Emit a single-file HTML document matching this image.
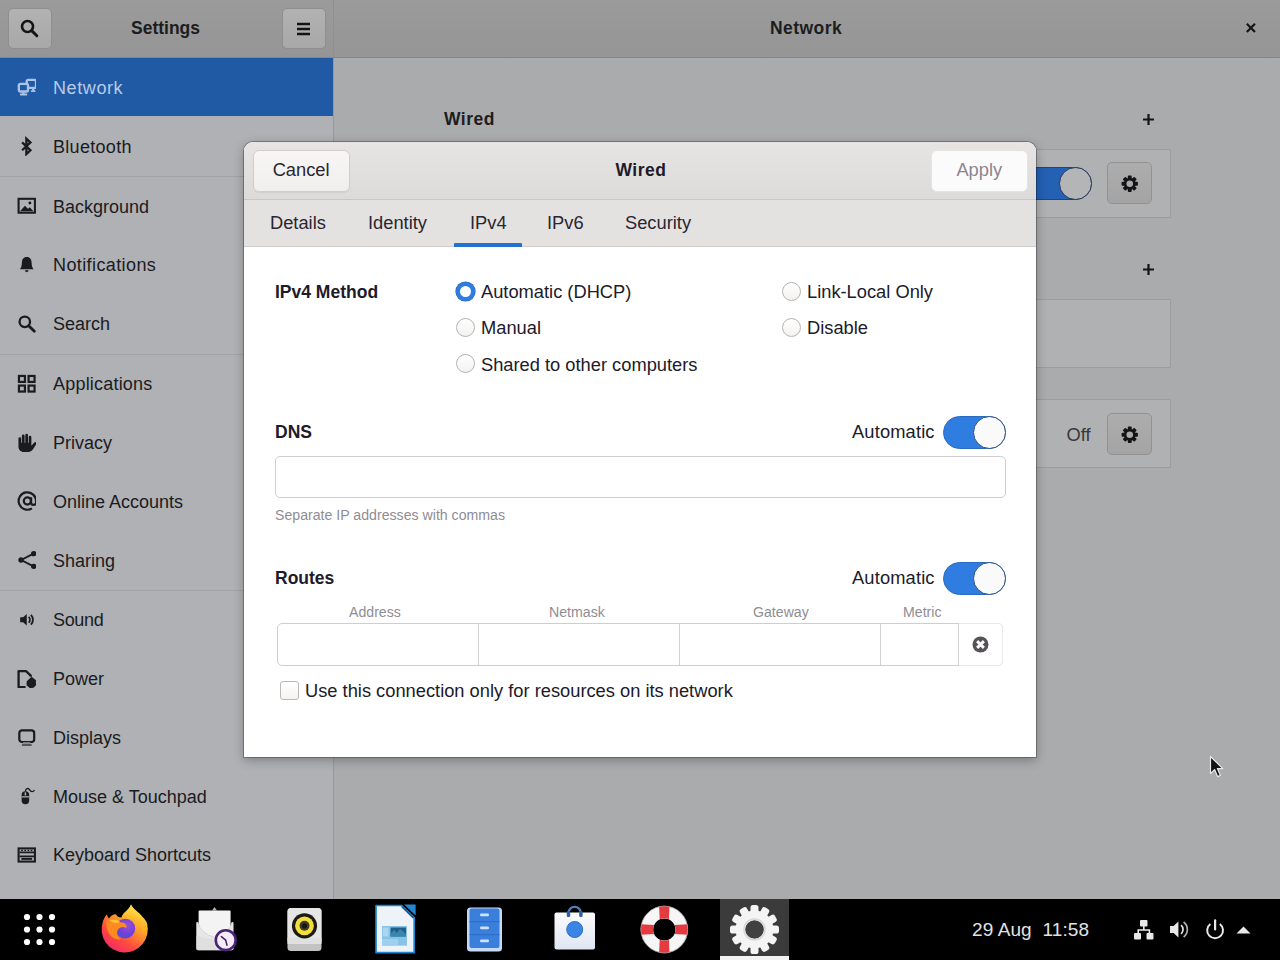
<!DOCTYPE html>
<html>
<head>
<meta charset="utf-8">
<title>Settings - Network - Wired</title>
<style>
*{box-sizing:border-box;margin:0;padding:0}
html,body{width:1280px;height:960px;overflow:hidden}
body{position:relative;background:#aaabad;font-family:"Liberation Sans",sans-serif;font-size:18px;color:#1f1c24;-webkit-font-smoothing:antialiased}
.abs{position:absolute}
#dlgi{position:absolute;left:-.4px;top:-.8px;width:793px;height:616px}
/* ---------- window header ---------- */
#hdr{position:absolute;left:0;top:0;width:1280px;height:58px;background:linear-gradient(#9b9b9b,#959595);border-bottom:1px solid #868686}
#hdr .sep{position:absolute;left:333px;top:0;width:1px;height:58px;background:#908f8e}
.hbtn{position:absolute;top:7.6px;width:44px;height:41.6px;border:1px solid #8f8f8f;border-radius:5px;background:linear-gradient(#b2b2b3,#a8a8a9);margin-left:-.4px}
.htitle{position:absolute;top:18px;font-weight:700;font-size:17.5px;color:#1d1d1f;white-space:nowrap}
/* ---------- sidebar ---------- */
#side{position:absolute;left:0;top:58px;width:334px;height:842px;background:#afb1b4;border-right:1px solid #98999b}
.row{position:absolute;left:0;width:333px;height:59px}
.row span{position:absolute;left:53px;top:19.4px;font-size:18px;line-height:21px;white-space:nowrap;color:#1b1b1f}
.row svg{position:absolute;left:16.75px;top:18.5px;width:19.5px;height:19.5px}
.row.sel{background:#205aa5}
.row.sel span{color:#b9cbe6}
.sline{position:absolute;left:0;width:333px;height:1px;background:#a1a2a5}
/* ---------- main content (dimmed) ---------- */
.sect{position:absolute;font-weight:700;font-size:17.5px;color:#1d1d1f}
.panel{position:absolute;left:443px;width:728px;border:1px solid #9b9c9d;background:#b0b1b3;border-radius:1px}
.gbtn{position:absolute;left:1107px;width:45px;height:42px;border:1px solid #929293;border-radius:5px;background:linear-gradient(#adadad,#a4a4a4)}
/* ---------- taskbar ---------- */
#bar{position:absolute;left:0;top:899px;width:1280px;height:61px;background:#000}
/* ---------- dialog ---------- */
#dlg{position:absolute;left:244.4px;top:141.8px;width:791.4px;height:615.2px;background:#fff;border-radius:9px 9px 0 0;box-shadow:0 0 0 1px rgba(0,0,0,.27),0 3px 11px rgba(0,0,0,.3);overflow:hidden}
#dhead{position:absolute;left:0;top:0;width:793px;height:59px;background:linear-gradient(#e6e5e4,#dddbda);border-bottom:1px solid #c9c6c4}
#dtabs{position:absolute;left:0;top:59px;width:793px;height:47px;background:#e4e2e1;border-bottom:1px solid #d0cdcb}
.dbtn{position:absolute;top:9px;height:41.6px;border:1px solid #d2cdc9;border-radius:6px;background:linear-gradient(#f7f6f5,#f0efee);text-align:center;line-height:37.6px;font-size:18.3px;color:#2a2630;box-shadow:0 1px 1px rgba(0,0,0,.06)}
.tab{position:absolute;top:11.8px;font-size:18.3px;color:#2a2630;white-space:nowrap}
.lbl{position:absolute;font-size:18.3px;line-height:21px;white-space:nowrap;color:#211a2a;margin-top:-.3px}
.b{font-weight:700;font-size:17.5px;margin-top:.6px !important}
.radio{position:absolute;width:19px;height:19px;border:1px solid #b7b3b0;border-radius:50%;background:linear-gradient(#fff,#f3f2f1)}
.radio.on{border:4.5px solid #2f7de0;background:#fff;box-shadow:0 0 0 .6px #2a67bb}
.sw{position:absolute;width:63px;height:33px;border-radius:17px;background:#2f7de0;border:1px solid #2a6bc0;margin-top:1px}
.sw i{position:absolute;right:-1px;top:-1px;width:33px;height:33px;border-radius:50%;background:#fafafa;border:1.3px solid #2b4f82}
.entry{position:absolute;border:1px solid #cfcdd3;border-radius:5px;background:#fff}
.small{position:absolute;font-size:14.15px;color:#8f8d94;white-space:nowrap;margin-top:-.7px}
</style>
</head>
<body>

<!-- WINDOW HEADER -->
<div id="hdr">
  <div class="hbtn" style="left:8px"><svg class="abs" style="left:10px;top:9px" width="21" height="21" viewBox="0 0 16 16"><circle cx="6.5" cy="6.5" r="4.2" fill="none" stroke="#141416" stroke-width="2"/><path d="M9.8 9.8 L13.6 13.6" stroke="#141416" stroke-width="2.2" stroke-linecap="round"/></svg></div>
  <div class="htitle" style="left:131px">Settings</div>
  <div class="hbtn" style="left:282px"><svg class="abs" style="left:13px;top:12px" width="15" height="16" viewBox="0 0 15 16"><path d="M1 3 H14 M1 8 H14 M1 13 H14" stroke="#141416" stroke-width="2.3"/></svg></div>
  <div class="sep"></div>
  <div class="htitle" style="left:770px;letter-spacing:.45px">Network</div>
  <svg class="abs" style="left:1244.8px;top:22.4px" width="11.8" height="11.8" viewBox="0 0 13 13"><path d="M2 2 L11 11 M11 2 L2 11" stroke="#141416" stroke-width="2.4"/></svg>
</div>

<!-- SIDEBAR -->
<div id="side">
  <div class="row sel" style="top:0px;height:58px"><svg viewBox="0 0 16 16"><g fill="none" stroke="#aac4e8" stroke-width="1.9"><rect x="8" y="2.3" width="7.6" height="6.6" rx="1.2"/><rect x="1.5" y="5.6" width="7.5" height="6.3" rx="1.2" fill="#205aa5"/></g><g fill="#aac4e8"><rect x="4.3" y="12.6" width="2" height="1.4"/><rect x="2.4" y="13.6" width="6" height="1.6" rx=".4"/><rect x="12.4" y="9.6" width="1.8" height="1.6"/><rect x="11.4" y="10.8" width="3.8" height="1.5" rx=".4"/></g></svg><span style="letter-spacing:.6px;top:20.1px">Network</span></div>
  <div class="row" style="top:59.9px"><svg viewBox="0 0 16 16"><path d="M4.2 4.8 L11 11.2 L7.7 14.3 V1.7 L11 4.8 L4.2 11.2" fill="none" stroke="#1b1b1f" stroke-width="1.9" stroke-linejoin="miter" transform="translate(0 .5)"/></svg><span style="letter-spacing:.3px">Bluetooth</span></div>
  <div class="row" style="top:119.4px"><svg viewBox="0 0 16 16"><rect x="1.3" y="2.3" width="13.4" height="11.4" fill="none" stroke="#1b1b1f" stroke-width="1.7"/><path d="M2.5 12.5 L6.5 8 L9 10.5 L10.5 9.3 L13.5 12.5 Z" fill="#1b1b1f"/><circle cx="10.6" cy="5.8" r="1.2" fill="#1b1b1f"/></svg><span>Background</span></div>
  <div class="row" style="top:178px"><svg viewBox="0 0 16 16"><path d="M8 1.6 C5.2 1.6 4 3.8 4 6.4 C4 9 3.4 10.4 2.4 11.6 L13.6 11.6 C12.6 10.4 12 9 12 6.4 C12 3.8 10.8 1.6 8 1.6 Z M6.5 12.6 h3 a1.5 1.5 0 0 1 -3 0 Z" fill="#1b1b1f"/></svg><span style="letter-spacing:.4px">Notifications</span></div>
  <div class="row" style="top:237px"><svg viewBox="0 0 16 16"><circle cx="6.4" cy="6.4" r="4.3" fill="none" stroke="#1b1b1f" stroke-width="1.9"/><path d="M9.6 9.6 L14.2 14.2" stroke="#1b1b1f" stroke-width="2.3" stroke-linecap="round"/></svg><span>Search</span></div>
  <div class="row" style="top:297px"><svg viewBox="0 0 16 16"><g fill="none" stroke="#1b1b1f" stroke-width="1.8"><rect x="1.6" y="1.6" width="4.9" height="4.9"/><rect x="9.5" y="1.6" width="4.9" height="4.9"/><rect x="1.6" y="9.5" width="4.9" height="4.9"/><rect x="9.5" y="9.5" width="4.9" height="4.9"/></g></svg><span style="letter-spacing:.2px">Applications</span></div>
  <div class="row" style="top:356px"><svg viewBox="0 0 16 16"><path d="M1.2 4.6 a1.1 1.1 0 0 1 2.2 0 V8 h.6 V2.4 a1.1 1.1 0 0 1 2.2 0 V8 h.6 V1.8 a1.1 1.1 0 0 1 2.2 0 V8 h.6 V3.4 a1.1 1.1 0 0 1 2.2 0 V10.4 L14.2 7.8 a1.05 1.05 0 0 1 1.7 1.2 L13 13.6 C12 15 10.6 15.6 8.8 15.6 H6 C3.2 15.6 1.2 13.8 1.2 11 Z" fill="#1b1b1f"/></svg><span>Privacy</span></div>
  <div class="row" style="top:414.7px"><svg viewBox="0 0 16 16"><g transform="translate(8.5 8.2) scale(1.17) translate(-8 -8)"><circle cx="8" cy="8" r="2.5" fill="none" stroke="#1b1b1f" stroke-width="1.55"/><path d="M10.6 5.3 V9 a1.7 1.7 0 0 0 3.5 0 V8 A6.1 6.1 0 1 0 11.2 13.2" fill="none" stroke="#1b1b1f" stroke-width="1.55"/></g></svg><span>Online Accounts</span></div>
  <div class="row" style="top:473.6px"><svg viewBox="0 0 16 16"><path d="M13.6 3 L3.4 8.2 L13.6 13.4" fill="none" stroke="#1b1b1f" stroke-width="1.5"/><circle cx="13.7" cy="3" r="2.2" fill="#1b1b1f"/><circle cx="3.3" cy="8.2" r="2.2" fill="#1b1b1f"/><circle cx="13.7" cy="13.4" r="2.2" fill="#1b1b1f"/></svg><span>Sharing</span></div>
  <div class="row" style="top:533px"><svg viewBox="0 0 16 16"><path d="M2.6 6 H5 L8 3.2 V12.8 L5 10 H2.6 Z" fill="#1b1b1f"/><path d="M9.6 5.6 a3.4 3.4 0 0 1 0 4.8 M11.4 4 a5.6 5.6 0 0 1 0 8" fill="none" stroke="#1b1b1f" stroke-width="1.5"/></svg><span style="letter-spacing:-.35px">Sound</span></div>
  <div class="row" style="top:592px"><svg viewBox="0 0 16 16"><path d="M7 14.8 H1.3 V1.8 H7.4 L11.3 5.4 V6.4" fill="none" stroke="#1b1b1f" stroke-width="1.9" stroke-linejoin="round"/><path d="M12 6.4 l4.4 3.4 -1.2 .8 1.2 1.8 -2.8 3 -3 .3 -2.8 -2.4 .2 -3.2 2.2 -2.2 Z" fill="#1b1b1f"/></svg><span>Power</span></div>
  <div class="row" style="top:651px"><svg viewBox="0 0 16 16"><rect x="1.9" y="1.9" width="12.2" height="9.6" rx="2.2" fill="none" stroke="#1b1b1f" stroke-width="1.8"/><rect x="4" y="13" width="8" height="1.8" rx=".5" fill="#55565a"/><rect x="5" y="11.6" width="6" height="1.3" fill="#8a8b8e"/></svg><span>Displays</span></div>
  <div class="row" style="top:709.8px"><svg viewBox="0 0 16 16"><path d="M3.8 7.4 a3.1 3.1 0 0 1 6.2 0 V11.8 a3.1 3.1 0 0 1 -6.2 0 Z" fill="#1b1b1f"/><rect x="6.3" y="5.2" width="1.2" height="2.6" fill="#afb1b4"/><rect x="3.8" y="8.4" width="6.2" height="1" fill="#afb1b4"/><path d="M6.9 4.6 C6.9 1.8 9.4 1.4 10.4 3.2 C11.4 5 13.2 5 14.4 3.4" fill="none" stroke="#1b1b1f" stroke-width="1.1"/></svg><span>Mouse &amp; Touchpad</span></div>
  <div class="row" style="top:768px"><svg viewBox="0 0 16 16"><rect x="1.3" y="2.8" width="13.4" height="10.8" fill="none" stroke="#1b1b1f" stroke-width="1.7"/><path d="M2 6.1 H14 M2 9.3 H14" stroke="#1b1b1f" stroke-width="1.5"/><path d="M3.4 4.4 h1.4 M6 4.4 h1.4 M8.6 4.4 h1.4 M11.2 4.4 h1.4" stroke="#1b1b1f" stroke-width="1.2"/><rect x="3.6" y="10.6" width="8.8" height="1.6" fill="#1b1b1f"/></svg><span>Keyboard Shortcuts</span></div>
  <div class="sline" style="top:118px"></div>
  <div class="sline" style="top:296px"></div>
  <div class="sline" style="top:532px"></div>
</div>

<!-- MAIN -->
<div id="main">
  <div class="sect" style="left:444px;top:109px;letter-spacing:.5px">Wired</div>
  <svg class="abs" style="left:1142px;top:113px" width="13" height="13" viewBox="0 0 13 13"><path d="M6.5 1 V12 M1 6.5 H12" stroke="#141416" stroke-width="2.2"/></svg>
  <div class="panel" style="top:149px;height:69px"></div>
  <div class="abs" style="left:1000px;top:166.8px;width:92px;height:32.8px;border-radius:17px;background:#2460b4;border:1px solid #1a4686"><i class="abs" style="right:-1px;top:-1px;width:32.8px;height:32.8px;border-radius:50%;background:#b4b5b7;border:1.5px solid #24395b"></i></div>
  <div class="gbtn" style="top:162px"><svg class="abs" style="left:12px;top:10.5px" width="19.5" height="19.5" viewBox="-11 -11 22 22"><g fill="#141416"><rect x="-2.2" y="-9.2" width="4.4" height="5" rx="1" transform="rotate(0)"/><rect x="-2.2" y="-9.2" width="4.4" height="5" rx="1" transform="rotate(45)"/><rect x="-2.2" y="-9.2" width="4.4" height="5" rx="1" transform="rotate(90)"/><rect x="-2.2" y="-9.2" width="4.4" height="5" rx="1" transform="rotate(135)"/><rect x="-2.2" y="-9.2" width="4.4" height="5" rx="1" transform="rotate(180)"/><rect x="-2.2" y="-9.2" width="4.4" height="5" rx="1" transform="rotate(225)"/><rect x="-2.2" y="-9.2" width="4.4" height="5" rx="1" transform="rotate(270)"/><rect x="-2.2" y="-9.2" width="4.4" height="5" rx="1" transform="rotate(315)"/><circle r="6.6"/></g><circle r="3.7" fill="#a9a9a9"/></svg></div>
  <svg class="abs" style="left:1142px;top:263px" width="13" height="13" viewBox="0 0 13 13"><path d="M6.5 1 V12 M1 6.5 H12" stroke="#141416" stroke-width="2.2"/></svg>
  <div class="panel" style="top:299px;height:69px"></div>
  <div class="panel" style="top:399px;height:69px"></div>
  <div class="abs" style="left:1066.5px;top:423.5px;font-size:18.3px;color:#38383a">Off</div>
  <div class="gbtn" style="top:413px"><svg class="abs" style="left:12px;top:10.5px" width="19.5" height="19.5" viewBox="-11 -11 22 22"><g fill="#141416"><rect x="-2.2" y="-9.2" width="4.4" height="5" rx="1" transform="rotate(0)"/><rect x="-2.2" y="-9.2" width="4.4" height="5" rx="1" transform="rotate(45)"/><rect x="-2.2" y="-9.2" width="4.4" height="5" rx="1" transform="rotate(90)"/><rect x="-2.2" y="-9.2" width="4.4" height="5" rx="1" transform="rotate(135)"/><rect x="-2.2" y="-9.2" width="4.4" height="5" rx="1" transform="rotate(180)"/><rect x="-2.2" y="-9.2" width="4.4" height="5" rx="1" transform="rotate(225)"/><rect x="-2.2" y="-9.2" width="4.4" height="5" rx="1" transform="rotate(270)"/><rect x="-2.2" y="-9.2" width="4.4" height="5" rx="1" transform="rotate(315)"/><circle r="6.6"/></g><circle r="3.7" fill="#a9a9a9"/></svg></div>
  <svg class="abs" style="left:1208.7px;top:754.5px" width="16" height="24" viewBox="0 0 16 24"><path d="M1.5 1.5 V18.5 L5.6 14.6 L8.6 21.6 L11.4 20.4 L8.4 13.6 H13.8 Z" fill="#111" stroke="#e8e8e8" stroke-width="1.2" stroke-linejoin="round"/></svg>
</div>

<!-- TASKBAR -->
<div id="bar">
  <div class="abs" style="left:720px;top:0;width:69px;height:61px;background:#3b3b3b"></div>
  <div class="abs" style="left:720px;top:57px;width:69px;height:4px;background:#f2f2f2"></div>
  <svg class="abs" style="left:0;top:0" width="1280" height="61" viewBox="0 0 1280 61">
    <defs>
      <linearGradient id="ffo" x1="0.85" y1="0.05" x2="0.2" y2="1"><stop offset="0" stop-color="#ffe437"/><stop offset=".35" stop-color="#ffa32a"/><stop offset=".7" stop-color="#ff4a3f"/><stop offset="1" stop-color="#f0256d"/></linearGradient>
      <linearGradient id="fff" x1="0.7" y1="0" x2="0.3" y2="1"><stop offset="0" stop-color="#fff14a"/><stop offset=".6" stop-color="#ffb52c"/><stop offset="1" stop-color="#ff7a2a"/></linearGradient>
      <radialGradient id="ffg" cx=".6" cy=".35" r=".8"><stop offset="0" stop-color="#9b4fd6"/><stop offset=".6" stop-color="#6a41d9"/><stop offset="1" stop-color="#3a5be0"/></radialGradient>
      <linearGradient id="env" x1="0" y1="0" x2="0" y2="1"><stop offset="0" stop-color="#f4f4f4"/><stop offset="1" stop-color="#d9d9d9"/></linearGradient>
      <linearGradient id="bag" x1="0" y1="0" x2="0" y2="1"><stop offset="0" stop-color="#fbfbfd"/><stop offset="1" stop-color="#dfe6f2"/></linearGradient>
    </defs>
    <circle cx="27" cy="18" r="3.1" fill="#fff"/><circle cx="39.5" cy="18" r="3.1" fill="#fff"/><circle cx="52" cy="18" r="3.1" fill="#fff"/><circle cx="27" cy="30.5" r="3.1" fill="#fff"/><circle cx="39.5" cy="30.5" r="3.1" fill="#fff"/><circle cx="52" cy="30.5" r="3.1" fill="#fff"/><circle cx="27" cy="43" r="3.1" fill="#fff"/><circle cx="39.5" cy="43" r="3.1" fill="#fff"/><circle cx="52" cy="43" r="3.1" fill="#fff"/>
    <!-- firefox -->
    <g>
      <path d="M131 5.600000000000023 C133 10.5 138.5 13 142 17.5 C145 20.5 146.8 22.5 147.2 25 A23.1 23.1 0 1 1 102.8 23 C103.4 20 105 17.5 107 15.200000000000045 C107.2 17 108 18.5 109 19.5 C110.5 16.799999999999955 113.5 15 116 15.200000000000045 C116.6 17 118.5 18.600000000000023 121.5 18.5 C123.5 13 129.5 11 131 5.600000000000023 Z" fill="url(#ffo)"/>
      <path d="M131 5.600000000000023 C133 10.5 138.5 13 142 17.5 C145.5 21.5 147 26 146 32 C144 24 138 19.5 131 20 C127 20.299999999999955 123 21 121.5 18.5 C123.5 13 129.5 11 131 5.600000000000023 Z" fill="url(#fff)"/>
      <circle cx="125.3" cy="29.600000000000023" r="9.9" fill="url(#ffg)"/>
      <path d="M106.5 22 C110 18.600000000000023 116.5 19 120 23.200000000000045 C124.6 22.799999999999955 127.6 26 126.2 29.200000000000045 C123.6 27 119.4 28.200000000000045 117.8 31 C116 34.60000000000002 117.5 38.60000000000002 121.5 40.5 C112.5 41.5 105.5 34 106.5 22 Z" fill="#ff8a1f"/>
      <path d="M109.5 21.200000000000045 C113.2 19.600000000000023 117.8 20.399999999999977 120 23.200000000000045 C116.4 24.399999999999977 112 23.600000000000023 109.5 21.200000000000045 Z" fill="#ffc53a"/>
    </g>
    <!-- evolution -->
    <g>
      <path d="M212 11.600000000000023 L214.5 8 L217 11.600000000000023 Z" fill="#b4b2ae"/>
      <rect x="198.6" y="11.399999999999977" width="32" height="30" rx="1" fill="#f3f3f3"/>
      <path d="M196.3 24 Q196.3 22.600000000000023 197.6 23 Q201 35 214.9 38.39999999999998 Q229 35 232.2 23 Q233.5 22.600000000000023 233.5 24 V49.39999999999998 Q233.5 51.200000000000045 231.7 51.200000000000045 H198.1 Q196.3 51.200000000000045 196.3 49.39999999999998 Z" fill="#e7e7e7"/>
      <path d="M197.6 23 Q201 35 214.9 38.39999999999998 Q229 35 232.2 23" fill="none" stroke="#d4d4d4" stroke-width=".9"/>
      <path d="M196.3 37 V49.39999999999998 Q196.3 51.200000000000045 198.1 51.200000000000045 H231.7 Q233.5 51.200000000000045 233.5 49.39999999999998 V45 Z" fill="#dcdcdc" opacity=".7"/>
      <circle cx="225.7" cy="41.200000000000045" r="9.9" fill="#f4ecfa" stroke="#4b2376" stroke-width="2.6"/>
      <path d="M225.7 41.200000000000045 L221.4 37.60000000000002 M225.7 41.200000000000045 L227 46.200000000000045" stroke="#40255c" stroke-width="1.5" stroke-linecap="round"/>
    </g>
    <!-- rhythmbox -->
    <g>
      <rect x="287.5" y="9" width="34" height="43" rx="3.5" fill="#c3c3c3"/>
      <rect x="287.5" y="9" width="34" height="35.5" rx="3.5" fill="#e6e6e6"/>
      <rect x="287.5" y="39" width="34" height="6" fill="#e0e0e0"/>
      <circle cx="304.5" cy="26.799999999999955" r="12.6" fill="#1d1b17"/>
      <circle cx="304.5" cy="26.799999999999955" r="9.4" fill="#f3df3a"/>
      <circle cx="304.5" cy="26.799999999999955" r="5" fill="#3d3b26"/>
      <circle cx="304.5" cy="26.799999999999955" r="2.6" fill="#181713"/>
    </g>
    <!-- libreoffice -->
    <g>
      <path d="M376 6.5 H401.6 L414.2 18.600000000000023 V53.60000000000002 H376 Z" fill="#eef3f9" stroke="#1d84cf" stroke-width="1.7" stroke-linejoin="round"/>
      <path d="M404.2 5.399999999999977 H415.6 V16.399999999999977 Z" fill="#2388d3"/>
      <path d="M401.6 7.5 L413.4 18.799999999999955" stroke="#0f5d9c" stroke-width="1.6"/>
      <rect x="382" y="27" width="25" height="19.6" fill="#86c3e6"/>
      <path d="M390.5 28.5 H406 V37.5 H390.5 Z" fill="#1f6088"/>
      <path d="M390.5 35 L394 31 L397 34 L400 30 L406 35 V37.5 H390.5 Z" fill="#3b86b0"/>
      <rect x="382" y="40" width="16" height="6.6" fill="#9fd0ee"/>
      <rect x="383" y="28.5" width="5.5" height="9" fill="#a9d6f0"/>
    </g>
    <!-- files -->
    <g>
      <rect x="467" y="8.5" width="35" height="44" rx="3.5" fill="#c6d9f5"/>
      <rect x="469.5" y="9.5" width="30" height="39.5" rx="2" fill="#3a7fdc"/>
      <rect x="469.5" y="22" width="30" height="1.2" fill="#2f6ec6"/><rect x="469.5" y="35" width="30" height="1.2" fill="#2f6ec6"/>
      <rect x="480" y="14.5" width="9" height="2.8" rx="1.2" fill="#cfe0f7"/>
      <rect x="480" y="27.5" width="9" height="2.8" rx="1.2" fill="#cfe0f7"/>
      <rect x="480" y="40.5" width="9" height="2.8" rx="1.2" fill="#cfe0f7"/>
    </g>
    <!-- software -->
    <g>
      <path d="M568.5 18 V14 a6.2 6.2 0 0 1 12.4 0 V18" fill="none" stroke="#4f7fbf" stroke-width="2.2"/>
      <rect x="554.5" y="13.5" width="40.5" height="37" rx="2" fill="url(#bag)"/>
      <rect x="566.8" y="12" width="3.4" height="6" rx="1.2" fill="#2f5f9f"/><rect x="579.2" y="12" width="3.4" height="6" rx="1.2" fill="#2f5f9f"/>
      <circle cx="574.7" cy="30.5" r="8" fill="#3b84e4"/>
      <circle cx="574.7" cy="30.5" r="8" fill="none" stroke="#2f6fca" stroke-width="1"/>
    </g>
    <!-- help -->
    <g transform="translate(664.3 30.5)">
      <circle r="17.3" fill="none" stroke="#f6f6f6" stroke-width="12.4"/>
      <g stroke="#e3343a" stroke-width="12.4" fill="none">
        <path d="M0 -17.3 A17.3 17.3 0 0 1 0 -17.3"/>
      </g>
      <g fill="#e43a40">
        <path d="M-5.2 -23.2 A23.6 23.6 0 0 1 5.2 -23.2 L4.6 -10.2 A11.2 11.2 0 0 0 -4.6 -10.2 Z"/>
        <path d="M-5.2 -23.2 A23.6 23.6 0 0 1 5.2 -23.2 L4.6 -10.2 A11.2 11.2 0 0 0 -4.6 -10.2 Z" transform="rotate(90)"/>
        <path d="M-5.2 -23.2 A23.6 23.6 0 0 1 5.2 -23.2 L4.6 -10.2 A11.2 11.2 0 0 0 -4.6 -10.2 Z" transform="rotate(180)"/>
        <path d="M-5.2 -23.2 A23.6 23.6 0 0 1 5.2 -23.2 L4.6 -10.2 A11.2 11.2 0 0 0 -4.6 -10.2 Z" transform="rotate(270)"/>
      </g>
      <circle r="23.4" fill="none" stroke="#9a9a9a" stroke-width=".8"/>
    </g>
    <g transform="translate(754.5 30.5)"><g fill="#f4f4f4"><rect x="-4" y="-24.5" width="8" height="10" rx="2.6" transform="rotate(0)"/><rect x="-4" y="-24.5" width="8" height="10" rx="2.6" transform="rotate(30)"/><rect x="-4" y="-24.5" width="8" height="10" rx="2.6" transform="rotate(60)"/><rect x="-4" y="-24.5" width="8" height="10" rx="2.6" transform="rotate(90)"/><rect x="-4" y="-24.5" width="8" height="10" rx="2.6" transform="rotate(120)"/><rect x="-4" y="-24.5" width="8" height="10" rx="2.6" transform="rotate(150)"/><rect x="-4" y="-24.5" width="8" height="10" rx="2.6" transform="rotate(180)"/><rect x="-4" y="-24.5" width="8" height="10" rx="2.6" transform="rotate(210)"/><rect x="-4" y="-24.5" width="8" height="10" rx="2.6" transform="rotate(240)"/><rect x="-4" y="-24.5" width="8" height="10" rx="2.6" transform="rotate(270)"/><rect x="-4" y="-24.5" width="8" height="10" rx="2.6" transform="rotate(300)"/><rect x="-4" y="-24.5" width="8" height="10" rx="2.6" transform="rotate(330)"/><circle r="19"/></g><circle r="9.3" fill="#404040"/><circle r="10.5" fill="none" stroke="#d9d9d9" stroke-width="1.6"/></g>
    <!-- tray -->
    <g fill="#e9e9e9">
      <rect x="1140" y="21" width="7.5" height="6.5" rx="1"/>
      <rect x="1134" y="34" width="7" height="6.5" rx="1"/>
      <rect x="1146.5" y="34" width="7" height="6.5" rx="1"/>
      <path d="M1143 27 h1.6 v3.2 h5.6 v4 h-1.6 v-2.4 h-9.6 v2.4 h-1.6 v-4 h5.6 Z"/>
      <path d="M1170 27 h3.6 l4.8 -4.6 v16.2 l-4.8 -4.6 h-3.6 Z"/>
      <path d="M1236.5 34.5 L1243.5 27.5 L1250.5 34.5 Z"/>
    </g>
    <g fill="none" stroke="#e9e9e9">
      <path d="M1181 26.200000000000045 a5.6 5.6 0 0 1 0 8.6" stroke-width="1.7"/>
      <path d="M1183.6 23 a9.4 9.4 0 0 1 0 15" stroke-width="1.7" opacity=".75"/>
      <path d="M1210.4 25 a7.9 7.9 0 1 0 9.4 0" stroke-width="2"/>
      <path d="M1215.1 21.299999999999955 V30.5" stroke-width="2.2" stroke-linecap="round"/>
    </g>
  </svg>
  <div class="abs" style="left:972px;top:19px;font-size:19px;line-height:22px;color:#e2e2e2;white-space:pre;letter-spacing:.1px;margin-top:.5px">29 Aug  11:58</div>
</div>

<!-- DIALOG -->
<div id="dlg"><div id="dlgi">
  <div id="dhead">
    <div class="dbtn" style="left:8.6px;width:97px">Cancel</div>
    <div class="lbl b" style="left:371.5px;top:18.6px;letter-spacing:.5px">Wired</div>
    <div class="dbtn" style="left:686.6px;width:97.4px;color:#8d848f;background:#fbfbfb;border-color:#e6e4e2;box-shadow:none">Apply</div>
  </div>
  <div id="dtabs">
    <div class="tab" style="left:26px">Details</div>
    <div class="tab" style="left:124px">Identity</div>
    <div class="tab" style="left:226px">IPv4</div>
    <div class="tab" style="left:303px">IPv6</div>
    <div class="tab" style="left:381px">Security</div>
    <div class="abs" style="left:210px;top:43px;width:68px;height:3.8px;background:#2170d2;border-radius:1px 1px 0 0"></div>
  </div>
  <div class="lbl b" style="left:31px;top:140px">IPv4 Method</div>
  <div class="radio on" style="left:212px;top:141px"></div><div class="lbl" style="left:237px;top:140px">Automatic (DHCP)</div>
  <div class="radio" style="left:212px;top:177px"></div><div class="lbl" style="left:237px;top:176px">Manual</div>
  <div class="radio" style="left:212px;top:213px"></div><div class="lbl" style="left:237px;top:213px">Shared to other computers</div>
  <div class="radio" style="left:538px;top:141px"></div><div class="lbl" style="left:563px;top:140px">Link-Local Only</div>
  <div class="radio" style="left:538px;top:177px"></div><div class="lbl" style="left:563px;top:176px">Disable</div>
  <div class="lbl b" style="left:31px;top:280px">DNS</div>
  <div class="lbl" style="left:608px;top:280px;letter-spacing:.15px">Automatic</div>
  <div class="sw" style="left:699px;top:274px"><i></i></div>
  <div class="entry" style="left:31px;top:315px;width:731px;height:42px"></div>
  <div class="small" style="left:31px;top:367px">Separate IP addresses with commas</div>
  <div class="lbl b" style="left:31px;top:426px">Routes</div>
  <div class="lbl" style="left:608px;top:426px;letter-spacing:.15px">Automatic</div>
  <div class="sw" style="left:699px;top:420px"><i></i></div>
  <div class="small" style="left:105px;top:463.5px">Address</div>
  <div class="small" style="left:305px;top:463.5px">Netmask</div>
  <div class="small" style="left:509px;top:463.5px">Gateway</div>
  <div class="small" style="left:659px;top:463.5px">Metric</div>
  <div class="entry" style="left:33px;top:482px;width:726px;height:43px;border-radius:5px"></div>
  <div class="abs" style="left:234px;top:483px;width:1px;height:41px;background:#d3d1d6"></div>
  <div class="abs" style="left:435px;top:483px;width:1px;height:41px;background:#d3d1d6"></div>
  <div class="abs" style="left:636px;top:483px;width:1px;height:41px;background:#d3d1d6"></div>
  <div class="abs" style="left:715px;top:482px;width:44px;height:43px;background:#fff;border:1px solid #e9e9ec;border-left:none;border-radius:0 5px 5px 0"></div>
  <div class="abs" style="left:714px;top:482px;width:1px;height:43px;background:#d3d1d6"></div>
  <svg class="abs" style="left:728px;top:495px" width="17" height="17" viewBox="0 0 17 17"><circle cx="8.5" cy="8.5" r="8" fill="#575159"/><path d="M5.1 5.1 L11.9 11.9 M11.9 5.1 L5.1 11.9" stroke="#fafafa" stroke-width="2.9"/></svg>
  <div class="abs" style="left:36px;top:540px;width:19px;height:19px;border:1px solid #bdb8b4;border-radius:3px;background:linear-gradient(#fff,#f4f3f2)"></div>
  <div class="lbl" style="left:61px;top:539px">Use this connection only for resources on its network</div>
</div></div>

</body>
</html>
